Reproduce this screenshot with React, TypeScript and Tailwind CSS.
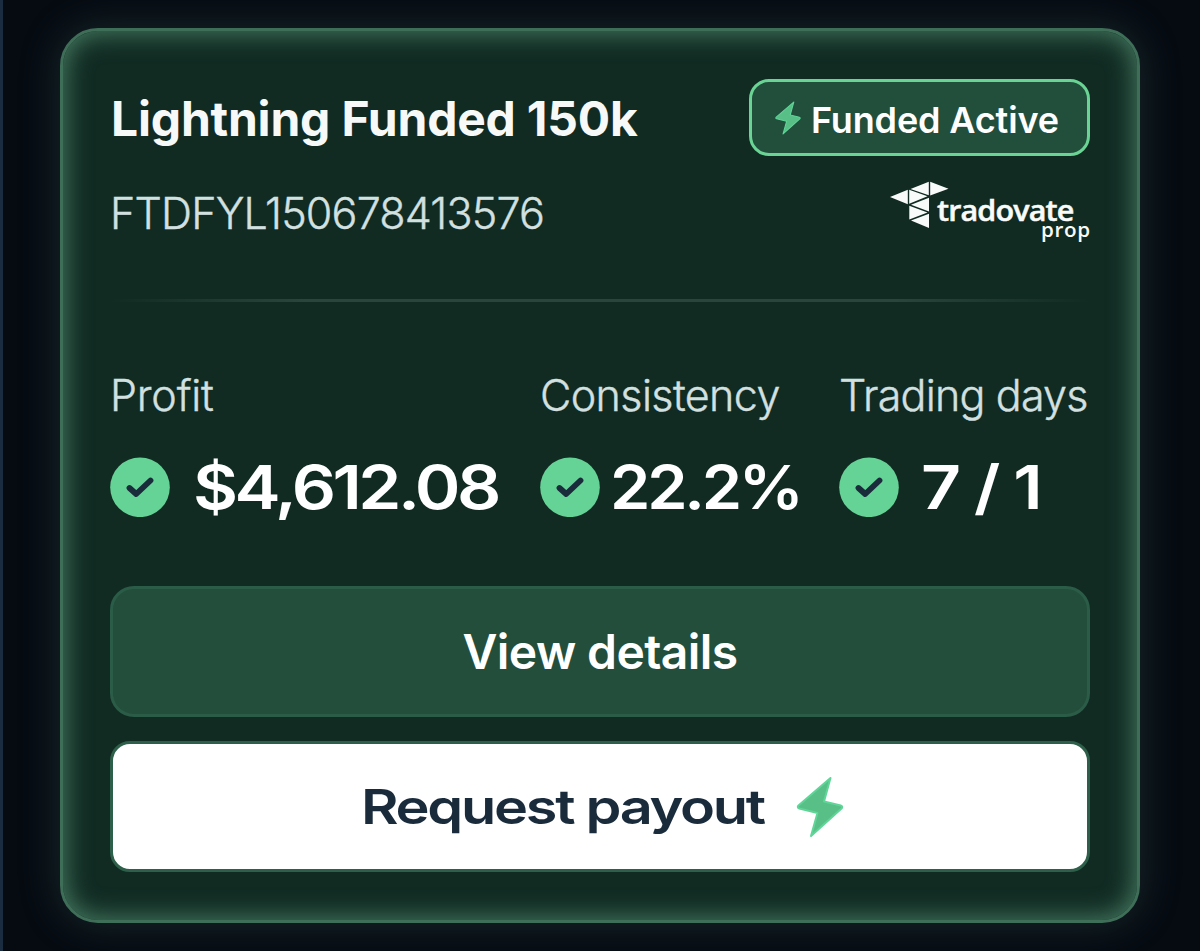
import clsx from 'clsx';

type Stat = {
  label: string;
  value: string;
  column: string;
  labelClass: string;
  valueClass: string;
};

const stats: Stat[] = [
  { label: 'Profit', value: '$4,612.08', column: 'w-[430px]', labelClass: 'tracking-[-0.2px]', valueClass: 'ml-[23px] tracking-[-3px] scale-x-[1.155]' },
  { label: 'Consistency', value: '22.2%', column: 'w-[299px]', labelClass: 'tracking-[-0.6px]', valueClass: 'ml-[10px] tracking-[-3px] scale-x-[1.08]' },
  { label: 'Trading days', value: '7 / 1', column: 'w-[251px]', labelClass: 'tracking-[-0.8px]', valueClass: 'ml-[22px] tracking-[-2px] scale-x-[1.16]' },
];

function Bolt({ className }: { className: string }) {
  return (
    <svg viewBox="0 0 48 62" className={className} fill="none">
      <path
        d="M34.5 2 2.5 29.5c-1.200 1.200-.8 2.600.8 3L21.500 37 15 60 45.500 32.500c1.200-1.200.8-2.600-.8-3L28 25.500Z"
        fill="#58bf86"
        stroke="#5fd598"
        strokeWidth="2"
        strokeLinejoin="round"
      />
    </svg>
  );
}

function CheckCircle() {
  return (
    <svg viewBox="0 0 60 60" className="size-[60px] shrink-0" fill="none">
      <circle cx="30" cy="30.300" r="29.800" fill="#65d396" />
      <path d="M19.500 31 26.200 37 40.500 23.500" stroke="#1a2b3c" strokeWidth="5.800" strokeLinecap="round" strokeLinejoin="round" />
    </svg>
  );
}

function TradovateLogo() {
  return (
    <div className="relative h-[62px] w-[200px] text-[#f8fbfa]">
      <svg viewBox="0 0 60 48" className="h-[48px] w-[60px]" fill="currentColor">
        <path d="M0 16 17.800 8.700V23.300ZM19.200 8.700 37.500 15.200 19.200 22.800ZM20.500 8 38.800.700V14.300ZM40.200.700 58.500 7.700 40.200 14.500Z" />
        <path d="M39 16.700V30.500L21 23.700ZM19.300 24.700V38.500L37.500 31.500ZM39 32.800V47L21 39.600Z" />
      </svg>
      <span className="absolute top-[17px] left-[47px] origin-left scale-x-[1.09] font-['Open_Sans',sans-serif] text-[28px] leading-[24px] font-semibold tracking-[-0.8px] [-webkit-text-stroke:0.5px_#f8fbfa]">
        tradovate
      </span>
      <span className="absolute top-[39px] left-[151px] origin-left scale-x-[1.03] font-['Open_Sans',sans-serif] text-[20px] leading-[20px] font-semibold tracking-[0.6px]">
        prop
      </span>
    </div>
  );
}

function StatItem({ label, value, column, labelClass, valueClass }: Stat) {
  return (
    <div className={clsx('shrink-0', column)}>
      <div className={clsx('w-max text-[43px] leading-[52px] font-light text-[#d3e0e0] [-webkit-text-stroke:0.4px_#d3e0e0]', labelClass)}>{label}</div>
      <div className="mt-[36px] flex h-[60px] items-center">
        <CheckCircle />
        <span className={clsx('origin-left text-[60px] leading-[60px] font-semibold whitespace-pre text-white', valueClass)}>{value}</span>
      </div>
    </div>
  );
}

function AccountCard() {
  return (
    <div className="h-[895px] w-[1080px] rounded-[38px] border-[3px] border-[#3f6e58] bg-[#112b23] px-[47px] pt-[48px] shadow-[0_0_40px_rgba(80,125,110,0.28),inset_0_0_26px_2px_rgba(82,140,112,0.85)]">
      <div className="flex h-[77px] items-center justify-between">
        <h1 className="mt-[2px] ml-px text-[48px] leading-[58px] font-bold tracking-[-0.2px] text-[#f7f9f8]">Lightning Funded 150k</h1>
        <div className="flex h-[77px] w-[341px] items-center rounded-[20px] border-[3px] border-[#6ad494] bg-[#224f3c] pl-[22px]">
          <Bolt className="h-[34px] w-[28px]" />
          <span className="mt-[4px] ml-[9px] text-[36px] leading-[44px] font-semibold tracking-[-0.15px] whitespace-nowrap text-white">Funded Active</span>
        </div>
      </div>

      <div className="mt-[25px] flex h-[63px] items-start justify-between">
        <span className="mt-[6px] text-[43px] leading-[52px] font-light tracking-[-0.8px] text-[#d3e0e0] [-webkit-text-stroke:0.4px_#d3e0e0]">
          FTDFYL150678413576
        </span>
        <TradovateLogo />
      </div>

      <div className="mt-[55px] h-[3px] bg-[linear-gradient(to_right,transparent,#2a463c_20%,#2a463c_80%,transparent)]" />

      <div className="mt-[67px] flex">
        {stats.map((stat) => (
          <StatItem key={stat.label} {...stat} />
        ))}
      </div>

      <div className="mt-[69px] flex flex-col gap-[24px]">
        <button className="flex h-[131px] items-center justify-center rounded-[24px] border-[3px] border-[#2b5c48] bg-[#224e3b] text-[48px] font-semibold tracking-[-0.6px] text-white">
          <span>View details</span>
        </button>
        <button className="flex h-[131px] items-center rounded-[20px] border-[3px] border-[#2d5f4a] bg-white pl-[248px] text-[48px] font-semibold text-[#1a2b3c]">
          <span className="w-[435px] origin-left scale-x-[1.2] text-left tracking-[-1.900px] whitespace-nowrap">Request payout</span>
          <Bolt className="h-[62px] w-[48px]" />
        </button>
      </div>
    </div>
  );
}

export default function App() {
  return (
    <div className="flex h-[951px] w-[1200px] overflow-hidden border-l-[3px] border-[#1a2c40] bg-[#060b12] pt-[28px] pl-[57px] font-['Inter',sans-serif]">
      <AccountCard />
    </div>
  );
}
